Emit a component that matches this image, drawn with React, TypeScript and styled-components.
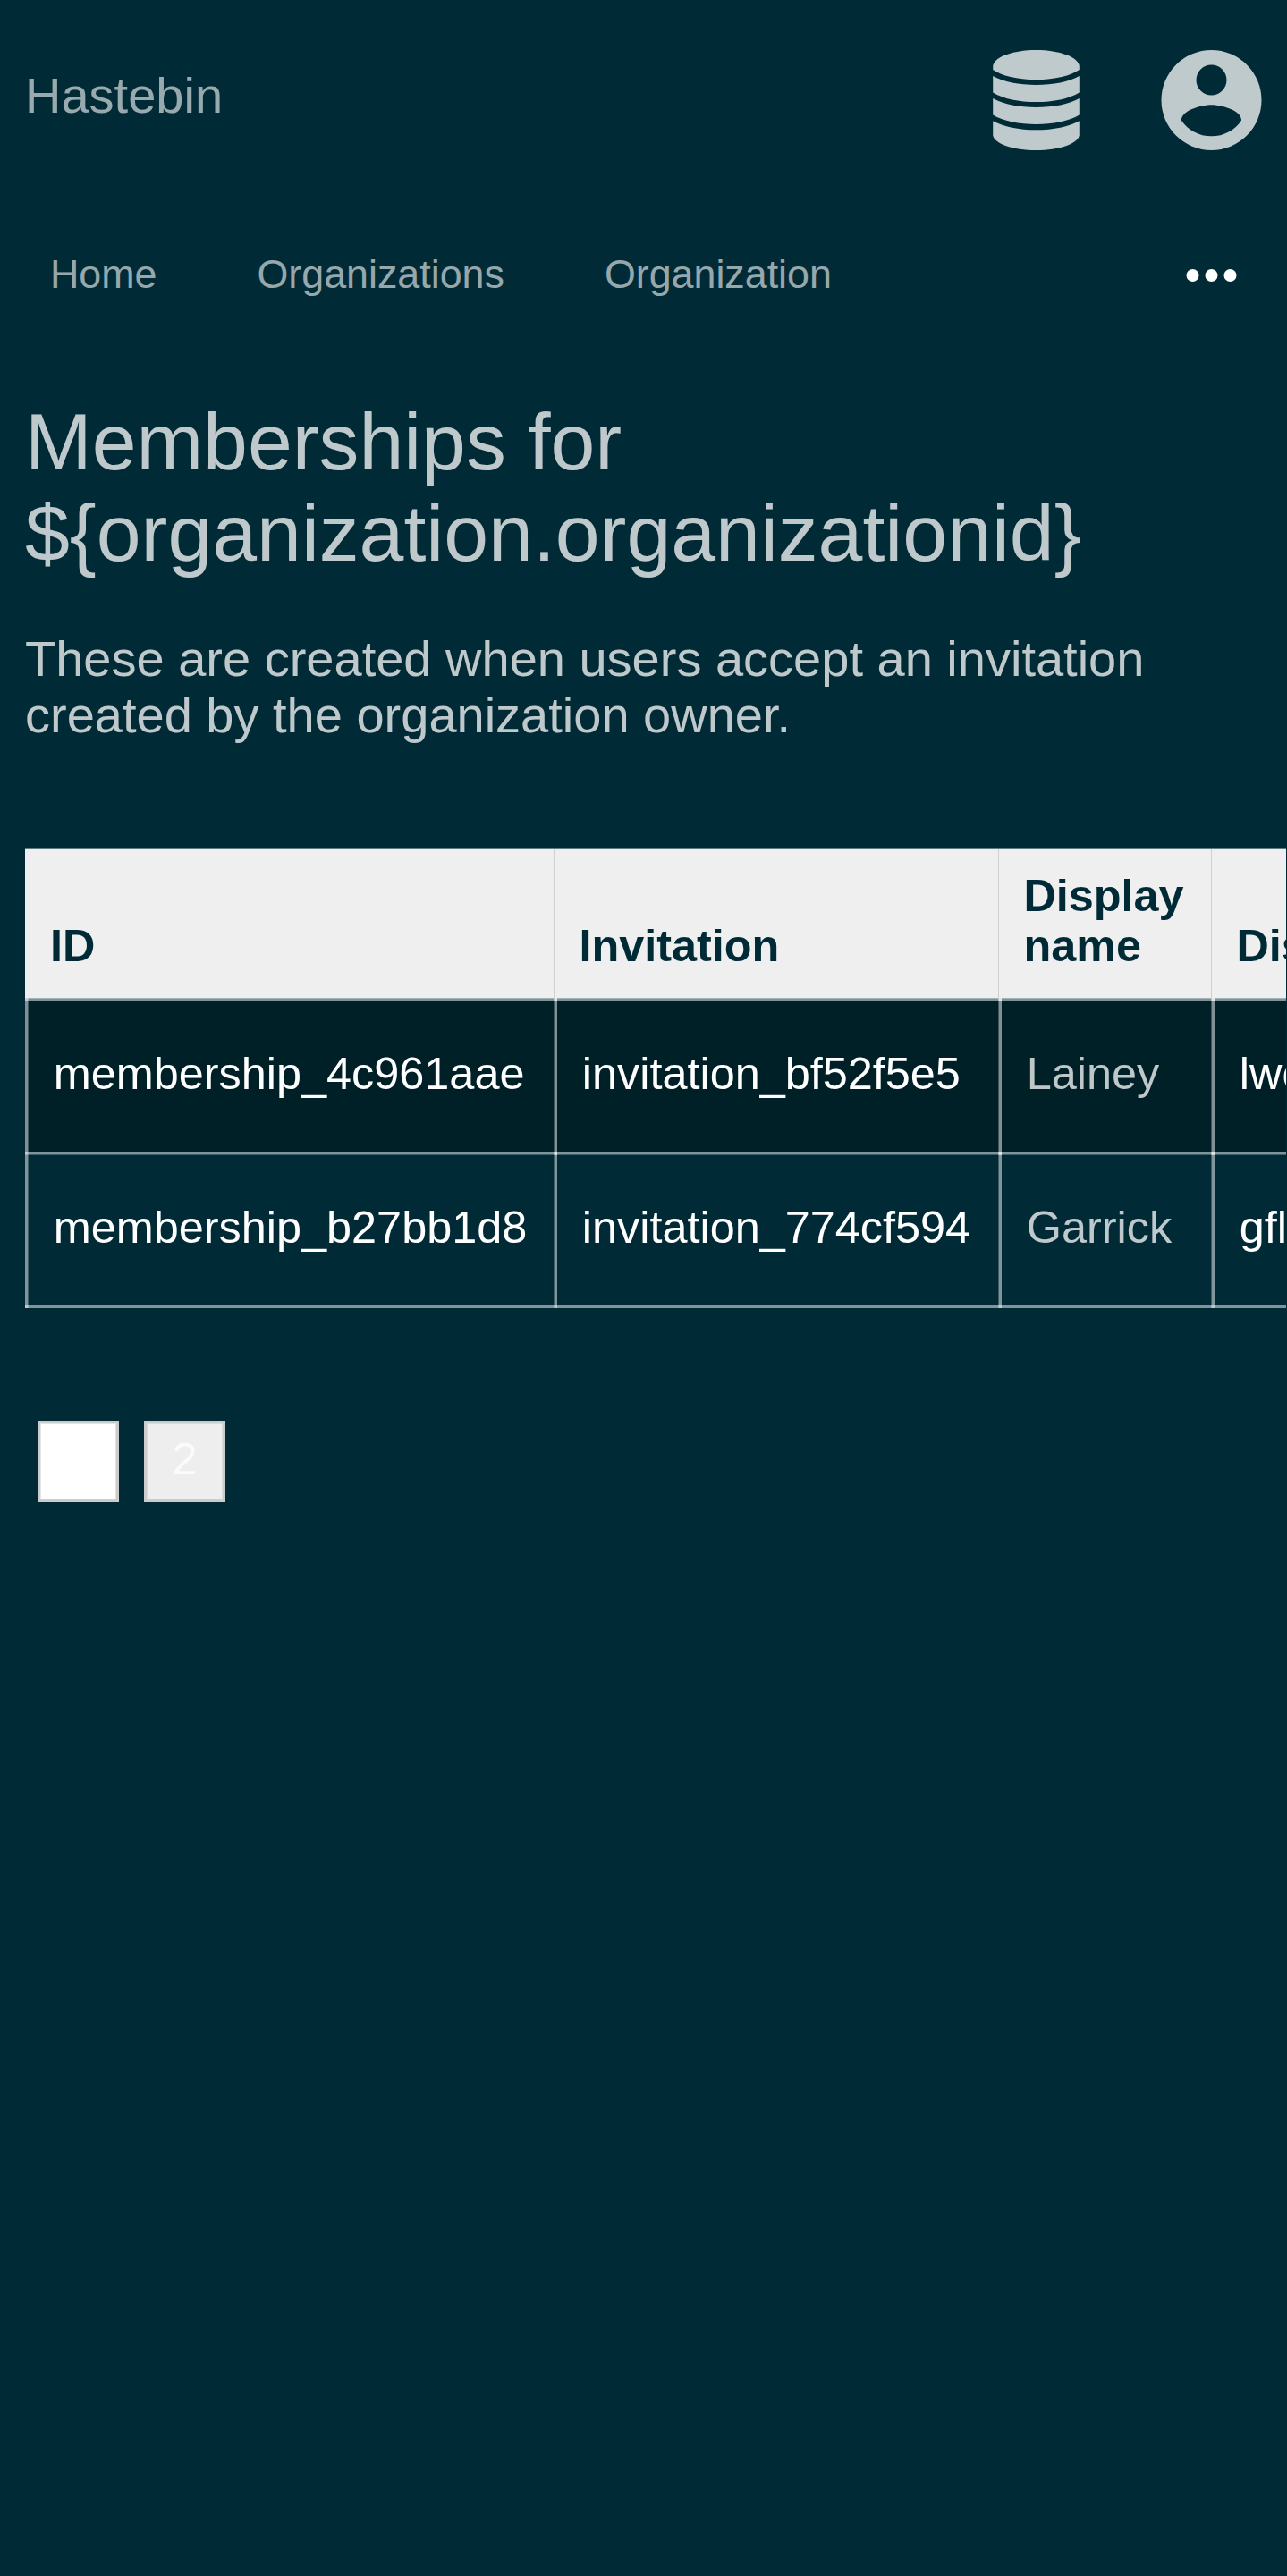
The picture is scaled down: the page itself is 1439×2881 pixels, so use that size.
import React from "react";
import styled, { createGlobalStyle } from "styled-components";

const GlobalStyle = createGlobalStyle`
  html, body { margin: 0; background: #002b36; }
  body {
    overflow: hidden;
    font-family: "Liberation Sans", Arial, sans-serif;
    font-size: 56px;
    line-height: 63px;
    color: rgba(255, 255, 255, 0.75);
  }
  *, *::before, *::after { box-sizing: border-box; }
`;

const Page = styled.div`
  width: 1438.5px;
  height: 2881px;
  overflow: hidden;
  background: #002b36;
`;

const Header = styled.header`
  display: flex;
  align-items: center;
  justify-content: space-between;
  height: 224px;
  padding: 0 28px;
`;

const Brand = styled.a`
  margin-top: -11px;
  color: rgba(255, 255, 255, 0.6);
`;

const HeaderIcons = styled.div`
  display: flex;
  align-items: center;
  gap: 84px;
`;

const Icon = styled.svg`
  display: block;
  width: 112px;
  height: 112px;
  overflow: visible;
  fill: #bfcacd;
`;

const Nav = styled.nav`
  display: flex;
  align-items: center;
  height: 168px;
  padding: 0 56px;
  font-size: 44.8px;
  line-height: 51px;
`;

const NavLink = styled.a`
  margin-top: -3px;
  margin-right: 112px;
  color: rgba(255, 255, 255, 0.6);
`;

const MoreButton = styled.button`
  margin: 0 0 0 auto;
  padding: 0;
  border: 0;
  background: none;
`;

const MoreIcon = styled.svg`
  display: block;
  width: 56px;
  height: 14px;
  overflow: visible;
  fill: #fff;
`;

const Main = styled.main`
  padding: 52px 0 0 28px;
`;

const Title = styled.h1`
  margin: 0;
  font-size: 89.6px;
  line-height: 101.5px;
  font-weight: 400;
`;

const Intro = styled.p`
  width: 1383px;
  margin: 58px 0 0;
`;

const TableScroller = styled.div`
  width: 1410px;
  margin-top: 117px;
  overflow: hidden;
`;

const Table = styled.div`
  width: 1700px;
  font-size: 50.4px;
  line-height: 56px;
`;

const columns = "591px 497px 238px 374px";
const line = "rgba(255, 255, 255, 0.5)";
const softLine = "rgba(255, 255, 255, 0.25)";

const HeadRow = styled.div`
  display: grid;
  grid-template-columns: ${columns};
  height: 168px;
  border-top: 1px solid #5f7b82;
  background: #efefef;
`;

const HeadCell = styled.div`
  display: flex;
  align-items: flex-end;
  padding: 0 28px 30.5px;
  color: #002b36;
  font-weight: 700;

  & + & {
    border-left: 1px solid #ccd2d3;
    padding-left: 27.4px;
  }
`;

const Row = styled.div<{ $first?: boolean }>`
  display: grid;
  grid-template-columns: ${columns};
  height: 172px;
  background: ${(p) =>
    p.$first
      ? `linear-gradient(#a3b0b3 1px, #80929a 1px 4px, #002028 4px)`
      : `linear-gradient(${line} 3px, ${softLine} 3px 4px, transparent 4px)`};

  &:last-child {
    height: 175px;
    background:
      linear-gradient(${line} 3px, ${softLine} 3px 4px, transparent 4px),
      linear-gradient(to top, ${line} 3px, ${softLine} 3px 4px, transparent 4px);
  }
`;

const Cell = styled.div<{ $muted?: boolean }>`
  padding: 56.5px 0 0 31.8px;
  background: linear-gradient(to right, ${softLine} 1px, ${line} 1px 4px, transparent 4px);
  color: ${(p) => (p.$muted ? "rgba(255, 255, 255, 0.75)" : "#fff")};
  white-space: nowrap;

  &:first-child {
    background: linear-gradient(to right, ${line} 3px, ${softLine} 3px 4px, transparent 4px);
  }

  &:not(:first-child) {
    background:
      linear-gradient(to right, ${softLine} 1px, ${line} 1px 4px) 0 0 / 4px 4px no-repeat,
      linear-gradient(to right, ${softLine} 1px, ${line} 1px 4px, transparent 4px);
  }
`;

const Pagination = styled.div`
  display: flex;
  gap: 28px;
  margin: 126px 0 0 14px;
`;

const PageButton = styled.button<{ $current?: boolean }>`
  width: 91px;
  height: 91px;
  padding: 0 0 6px;
  border: 3px solid #ccc;
  background: ${(p) => (p.$current ? "#fff" : "#eee")};
  box-shadow: inset 0 0 0 1px ${(p) => (p.$current ? "#e5e5e5" : "#dcdcdc")};
  color: ${(p) => (p.$current ? "#fff" : "rgba(255, 255, 255, 0.75)")};
  font: 50.4px/56px "Liberation Sans", Arial, sans-serif;
`;

const rows = [
  { id: "membership_4c961aae", invitation: "invitation_bf52f5e5", name: "Lainey", email: "lwo" },
  { id: "membership_b27bb1d8", invitation: "invitation_774cf594", name: "Garrick", email: "gfl" },
];

export default function App() {
  return (
    <Page>
      <GlobalStyle />
      <Header>
        <Brand>Hastebin</Brand>
        <HeaderIcons>
          <Icon viewBox="0.5 0 112 112" aria-label="Administrator">
            <path d="M7.700 18.500C7.700 8 30 0 56 0s48.300 8 48.300 18.500v3.400C95 28.500 77 33 56 33S17 28.500 7.700 21.900Z" />
            <path d="M7.700 29C19 35.500 37 39 56 39s37-3.500 48.300-10v18.400C93 54.300 75 58 56 58S19 54.300 7.700 47.400Z" />
            <path d="M7.700 54C19 60.500 37 64 56 64s37-3.500 48.300-10v18.600C93 79.400 75 83 56 83S19 79.400 7.700 72.600Z" />
            <path d="M7.700 79.200C19 85.700 37 89.300 56 89.300s37-3.600 48.300-10.100v16C103 104.500 82 112 56 112S9 104.500 7.700 95.200Z" />
          </Icon>
          <Icon viewBox="0.5 0 112 112" aria-label="Account">
            <path
              fillRule="evenodd"
              d="M56 0a56 56 0 1 0 0 112a56 56 0 1 0 0-112ZM56 16.500a17 17 0 1 1 0 34a17 17 0 1 1 0-34ZM22.400 78.400C22.600 67.200 44.800 61.200 56 61.200s33.400 6 33.600 17.200C82.400 89.300 70 96.300 56 96.300s-26.400-7-33.600-17.900Z"
            />
          </Icon>
        </HeaderIcons>
      </Header>
      <Nav>
        <NavLink>Home</NavLink>
        <NavLink>Organizations</NavLink>
        <NavLink>Organization</NavLink>
        <MoreButton aria-label="More">
          <MoreIcon viewBox="0.5 0 56 14">
            <circle cx="7" cy="7" r="7" />
            <circle cx="28" cy="7" r="7" />
            <circle cx="49" cy="7" r="7" />
          </MoreIcon>
        </MoreButton>
      </Nav>
      <Main>
        <Title>
          Memberships for
          <br />
          {"${organization.organizationid}"}
        </Title>
        <Intro>These are created when users accept an invitation created by the organization owner.</Intro>
        <TableScroller>
          <Table>
            <HeadRow>
              <HeadCell>ID</HeadCell>
              <HeadCell>Invitation</HeadCell>
              <HeadCell>
                Display
                <br />
                name
              </HeadCell>
              <HeadCell>Dis</HeadCell>
            </HeadRow>
            {rows.map((row, index) => (
              <Row key={row.id} $first={index === 0}>
                <Cell>{row.id}</Cell>
                <Cell>{row.invitation}</Cell>
                <Cell $muted>{row.name}</Cell>
                <Cell>{row.email}</Cell>
              </Row>
            ))}
          </Table>
        </TableScroller>
        <Pagination>
          <PageButton $current>1</PageButton>
          <PageButton>2</PageButton>
        </Pagination>
      </Main>
    </Page>
  );
}
